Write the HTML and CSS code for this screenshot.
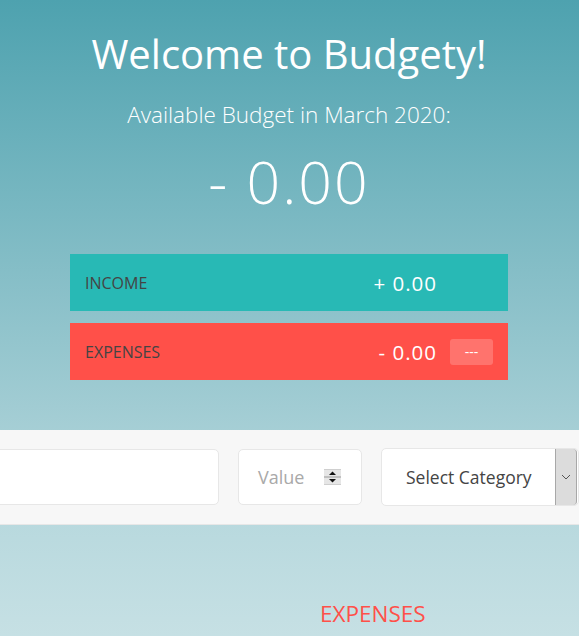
FILE: index.html
```html
<!DOCTYPE html>
<html lang="en">
<head>
<meta charset="utf-8">
<title>Budgety</title>
<link rel="stylesheet" href="styles.css">
</head>
<body>
<div class="top">
  <h1 class="welcome">Welcome to Budgety!</h1>
  <div class="budget__title">Available Budget in <span>March 2020</span>:</div>
  <div class="budget__value">- 0.00</div>
  <div class="budget__row budget__income">
    <div class="budget__text">Income</div>
    <div class="budget__right">
      <div class="budget__amount">+ 0.00</div>
      <div class="budget__pct budget__pct--empty">&nbsp;</div>
    </div>
  </div>
  <div class="budget__row budget__expenses">
    <div class="budget__text">Expenses</div>
    <div class="budget__right">
      <div class="budget__amount">- 0.00</div>
      <div class="budget__pct">---</div>
    </div>
  </div>
</div>
<div class="add">
  <div class="add__container">
    <div class="field field--desc"></div>
    <div class="field field--value">
      <span class="placeholder">Value</span>
      <span class="spin">
        <svg width="17" height="16" viewBox="0 0 17 16">
          <rect x="0" y="0" width="17" height="16" fill="#e6e6e6"/>
          <line x1="0" y1="8" x2="17" y2="8" stroke="#9a9a9a" stroke-width="1"/>
          <line x1="0" y1="0.5" x2="17" y2="0.5" stroke="#cfcfcf" stroke-width="1"/>
          <line x1="0" y1="15.5" x2="17" y2="15.5" stroke="#cfcfcf" stroke-width="1"/>
          <polygon points="5,6 12,6 8.5,2.5" fill="#111"/>
          <polygon points="5,10 12,10 8.5,13.5" fill="#111"/>
        </svg>
      </span>
    </div>
    <div class="field field--select">
      <span class="select__text">Select Category</span>
      <span class="select__arrow">
        <svg width="10" height="6" viewBox="0 0 10 6"><polyline points="1,1 5,5 9,1" fill="none" stroke="#555" stroke-width="1"/></svg>
      </span>
    </div>
  </div>
</div>
<div class="bottom">
  <h2 class="expenses__title">Expenses</h2>
</div>
</body>
</html>
```
FILE: styles.css
```css
* { box-sizing: border-box; margin: 0; padding: 0; }
html, body { height: 100%; }
body {
  font-family: "Open Sans", "Liberation Sans", sans-serif;
  color: #555;
  background: linear-gradient(180deg, #4ea2af 0%, #a1ccd3 64%, #b8d9de 82%, #c6e0e4 100%);
  overflow: hidden;
  width: 579px;
  height: 636px;
}
.top {
  padding-top: 29px;
  padding-right: 1px;
  height: 430px;
  display: flex;
  flex-direction: column;
  align-items: center;
  color: #fff;
}
.welcome {
  font-size: 40px;
  font-weight: 400;
  line-height: 50px;
  text-align: center;
}
.budget__title {
  margin-top: 21px;
  font-size: 22.5px;
  font-weight: 300;
  line-height: 30px;
}
.budget__value {
  margin-top: 11px;
  font-size: 59px;
  font-weight: 300;
  line-height: 80px;
  letter-spacing: 2px;
}
.budget__row {
  width: 438px;
  height: 57px;
  display: flex;
  align-items: center;
  justify-content: space-between;
  padding: 0 15px 0 15px;
}
.budget__income { margin-top: 33px; background: #28b9b5; }
.budget__expenses { margin-top: 12px; background: #ff5049; }
.budget__text {
  text-transform: uppercase;
  font-size: 16px;
  color: #444;
}
.budget__right { display: flex; align-items: center; }
.budget__amount {
  font-size: 20.5px;
  letter-spacing: 1px;
  color: #fff;
}
.budget__pct {
  margin-left: 13px;
  width: 43px;
  height: 26px;
  line-height: 26px;
  border-radius: 3px;
  background: rgba(255,255,255,0.2);
  text-align: center;
  font-size: 14px;
  color: #fff;
}
.budget__pct--empty { background: transparent; }
.add {
  height: 95px;
  background: #f7f7f7;
  border-bottom: 1px solid #e7e7e7;
  display: flex;
  align-items: center;
}
.add__container {
  display: flex;
  align-items: center;
  gap: 19px;
  margin-left: -21px;
}
.field {
  background: #fff;
  border: 1px solid #e7e7e7;
  border-radius: 5px;
  height: 56px;
  display: flex;
  align-items: center;
}
.field--desc { width: 240px; }
.field--value { width: 124px; padding-left: 19px; justify-content: space-between; padding-right: 20px; }
.placeholder { font-size: 18px; color: #a9a9a9; }
.spin { display: flex; }
.field--select {
  width: 198px;
  height: 58px;
  padding-left: 24px;
  justify-content: space-between;
  overflow: hidden;
}
.select__text { font-size: 17.5px; color: #444; }
.select__arrow {
  width: 22px;
  align-self: stretch;
  background: #dcdcdc;
  border-left: 1px solid #a8a8a8;
  border-right: 1px solid #a8a8a8;
  border-radius: 0 4px 4px 0;
  display: flex;
  align-items: center;
  justify-content: center;
  margin-right: 1px;
}
.bottom {
  padding-left: 320px;
  padding-top: 74px;
}
.expenses__title {
  color: #ff5049;
  font-size: 22.5px;
  font-weight: 400;
  text-transform: uppercase;
  line-height: 30px;
}
```
